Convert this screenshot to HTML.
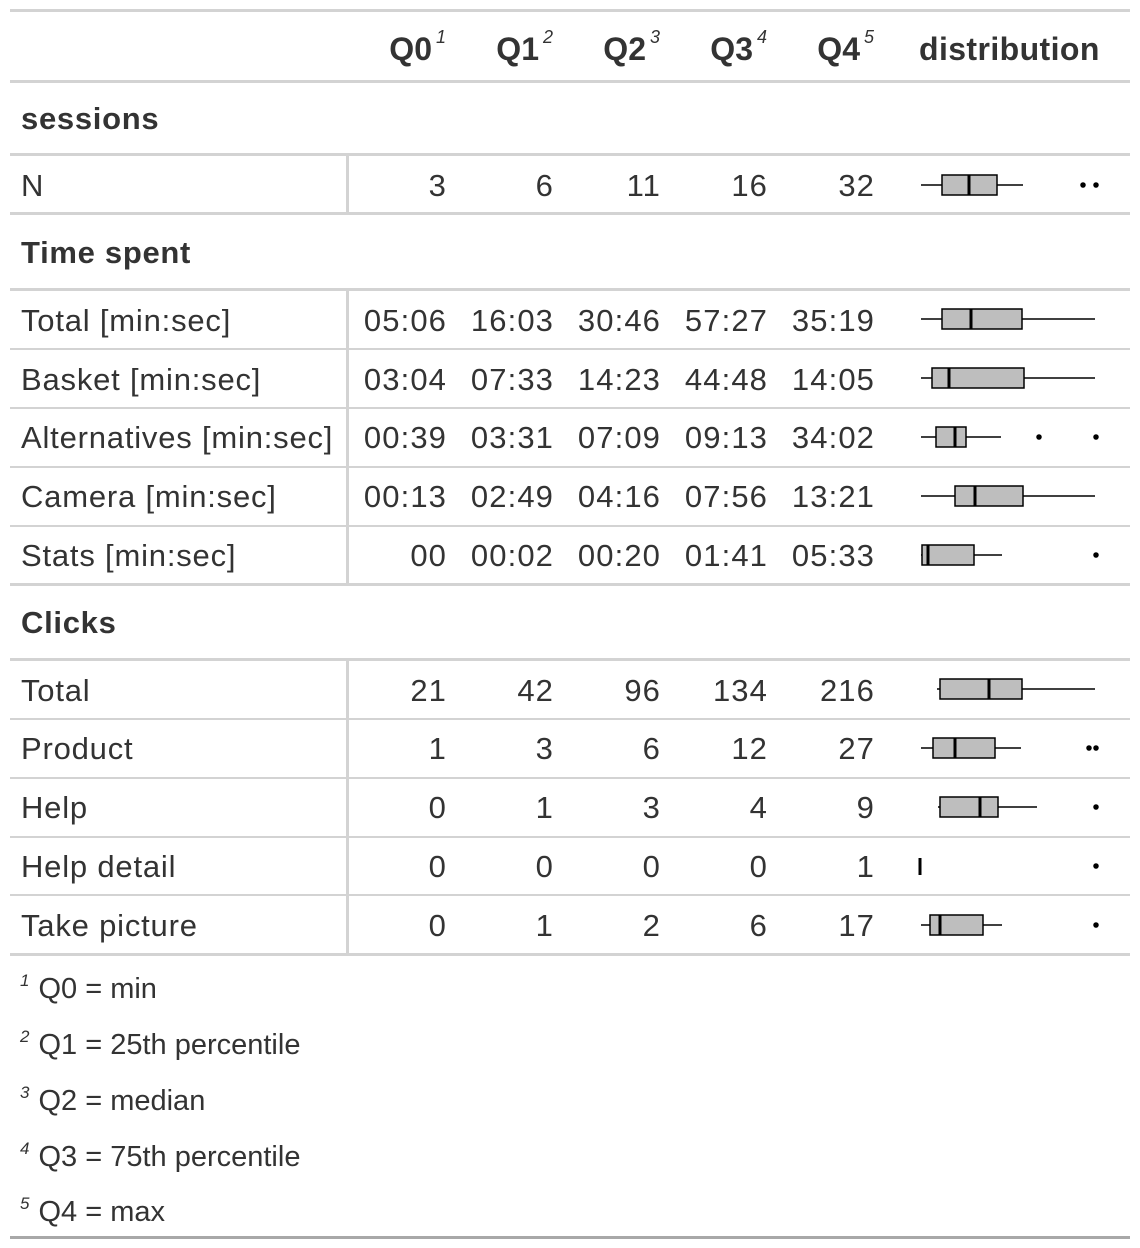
<!DOCTYPE html>
<html><head><meta charset="utf-8"><style>
body{margin:0;width:1140px;height:1248px;background:#fff;position:relative;overflow:hidden;font-family:"Liberation Sans",sans-serif;color:#333;}
.l{position:absolute;left:10px;width:1120px;background:#d3d3d3;}
.v{position:absolute;left:346px;width:3px;background:#d3d3d3;}
.t{position:absolute;height:40px;line-height:40px;font-size:31px;white-space:nowrap;letter-spacing:0.8px;}
.n{position:absolute;height:40px;line-height:40px;font-size:31px;white-space:nowrap;text-align:right;width:110px;letter-spacing:1.1px;}
.b{font-weight:bold;letter-spacing:0.7px;}
.h{position:absolute;height:40px;line-height:40px;font-size:32px;font-weight:bold;white-space:nowrap;text-align:right;width:100px;}
sup{font-size:18px;font-weight:normal;font-style:italic;vertical-align:top;position:relative;top:-12px;margin-left:4px;}
.f{position:absolute;left:20px;height:36px;line-height:36px;font-size:29px;white-space:nowrap;}
.f i{font-size:17px;position:relative;top:-12px;margin-right:9px;}
</style></head><body>
<div class="l" style="top:9px;height:3px"></div>
<div class="l" style="top:80px;height:3px"></div>
<div class="l" style="top:153px;height:3px"></div>
<div class="l" style="top:212px;height:3px"></div>
<div class="l" style="top:288px;height:3px"></div>
<div class="l" style="top:348px;height:2px"></div>
<div class="l" style="top:407px;height:2px"></div>
<div class="l" style="top:466px;height:2px"></div>
<div class="l" style="top:525px;height:2px"></div>
<div class="l" style="top:583px;height:3px"></div>
<div class="l" style="top:658px;height:3px"></div>
<div class="l" style="top:718px;height:2px"></div>
<div class="l" style="top:777px;height:2px"></div>
<div class="l" style="top:836px;height:2px"></div>
<div class="l" style="top:894px;height:2px"></div>
<div class="l" style="top:953px;height:3px"></div>
<div class="l" style="top:1236px;height:3px;background:#a8a8a8"></div>
<div class="v" style="top:155px;height:58px"></div>
<div class="v" style="top:290px;height:294px"></div>
<div class="v" style="top:660px;height:294px"></div>

<div class="h" style="left:346px;top:29px">Q0<sup>1</sup></div>
<div class="h" style="left:453px;top:29px">Q1<sup>2</sup></div>
<div class="h" style="left:560px;top:29px">Q2<sup>3</sup></div>
<div class="h" style="left:667px;top:29px">Q3<sup>4</sup></div>
<div class="h" style="left:774px;top:29px">Q4<sup>5</sup></div>
<div class="t b" style="left:919px;top:29px;font-size:32px;letter-spacing:0.4px">distribution</div>

<div class="t b" style="left:21px;top:99px">sessions</div>
<div class="t b" style="left:21px;top:233px">Time spent</div>
<div class="t b" style="left:21px;top:603px">Clicks</div>

<div class="t" style="left:21px;top:166px">N</div>
<div class="t" style="left:21px;top:301px">Total [min:sec]</div>
<div class="t" style="left:21px;top:360px">Basket [min:sec]</div>
<div class="t" style="left:21px;top:418px">Alternatives [min:sec]</div>
<div class="t" style="left:21px;top:477px">Camera [min:sec]</div>
<div class="t" style="left:21px;top:536px">Stats [min:sec]</div>
<div class="t" style="left:21px;top:671px">Total</div>
<div class="t" style="left:21px;top:729px">Product</div>
<div class="t" style="left:21px;top:788px">Help</div>
<div class="t" style="left:21px;top:847px">Help detail</div>
<div class="t" style="left:21px;top:906px">Take picture</div>

<div class="n" style="left:337px;top:166px">3</div><div class="n" style="left:444px;top:166px">6</div><div class="n" style="left:551px;top:166px">11</div><div class="n" style="left:658px;top:166px">16</div><div class="n" style="left:765px;top:166px">32</div>
<div class="n" style="left:337px;top:301px">05:06</div><div class="n" style="left:444px;top:301px">16:03</div><div class="n" style="left:551px;top:301px">30:46</div><div class="n" style="left:658px;top:301px">57:27</div><div class="n" style="left:765px;top:301px">35:19</div>
<div class="n" style="left:337px;top:360px">03:04</div><div class="n" style="left:444px;top:360px">07:33</div><div class="n" style="left:551px;top:360px">14:23</div><div class="n" style="left:658px;top:360px">44:48</div><div class="n" style="left:765px;top:360px">14:05</div>
<div class="n" style="left:337px;top:418px">00:39</div><div class="n" style="left:444px;top:418px">03:31</div><div class="n" style="left:551px;top:418px">07:09</div><div class="n" style="left:658px;top:418px">09:13</div><div class="n" style="left:765px;top:418px">34:02</div>
<div class="n" style="left:337px;top:477px">00:13</div><div class="n" style="left:444px;top:477px">02:49</div><div class="n" style="left:551px;top:477px">04:16</div><div class="n" style="left:658px;top:477px">07:56</div><div class="n" style="left:765px;top:477px">13:21</div>
<div class="n" style="left:337px;top:536px">00</div><div class="n" style="left:444px;top:536px">00:02</div><div class="n" style="left:551px;top:536px">00:20</div><div class="n" style="left:658px;top:536px">01:41</div><div class="n" style="left:765px;top:536px">05:33</div>
<div class="n" style="left:337px;top:671px">21</div><div class="n" style="left:444px;top:671px">42</div><div class="n" style="left:551px;top:671px">96</div><div class="n" style="left:658px;top:671px">134</div><div class="n" style="left:765px;top:671px">216</div>
<div class="n" style="left:337px;top:729px">1</div><div class="n" style="left:444px;top:729px">3</div><div class="n" style="left:551px;top:729px">6</div><div class="n" style="left:658px;top:729px">12</div><div class="n" style="left:765px;top:729px">27</div>
<div class="n" style="left:337px;top:788px">0</div><div class="n" style="left:444px;top:788px">1</div><div class="n" style="left:551px;top:788px">3</div><div class="n" style="left:658px;top:788px">4</div><div class="n" style="left:765px;top:788px">9</div>
<div class="n" style="left:337px;top:847px">0</div><div class="n" style="left:444px;top:847px">0</div><div class="n" style="left:551px;top:847px">0</div><div class="n" style="left:658px;top:847px">0</div><div class="n" style="left:765px;top:847px">1</div>
<div class="n" style="left:337px;top:906px">0</div><div class="n" style="left:444px;top:906px">1</div><div class="n" style="left:551px;top:906px">2</div><div class="n" style="left:658px;top:906px">6</div><div class="n" style="left:765px;top:906px">17</div>

<svg style="position:absolute;left:0;top:0" width="1140" height="1248" stroke="#000" stroke-width="1.5">
<g fill="#bebebe">
<line x1="921" y1="185" x2="1023" y2="185"/><rect x="942" y="175" width="55" height="20"/><line x1="969" y1="175" x2="969" y2="195" stroke-width="3"/>
<circle cx="1083" cy="185" r="2" fill="#000"/><circle cx="1096" cy="185" r="2" fill="#000"/>
<line x1="921" y1="319" x2="1095" y2="319"/><rect x="942" y="309" width="80" height="20"/><line x1="971" y1="309" x2="971" y2="329" stroke-width="3"/>
<line x1="921" y1="378" x2="1095" y2="378"/><rect x="932" y="368" width="92" height="20"/><line x1="949" y1="368" x2="949" y2="388" stroke-width="3"/>
<line x1="921" y1="437" x2="1001" y2="437"/><rect x="936" y="427" width="30" height="20"/><line x1="955" y1="427" x2="955" y2="447" stroke-width="3"/>
<circle cx="1039" cy="437" r="2" fill="#000"/><circle cx="1096" cy="437" r="2" fill="#000"/>
<line x1="921" y1="496" x2="1095" y2="496"/><rect x="955" y="486" width="68" height="20"/><line x1="975" y1="486" x2="975" y2="506" stroke-width="3"/>
<line x1="921" y1="555" x2="1002" y2="555"/><rect x="922" y="545" width="52" height="20"/><line x1="928" y1="545" x2="928" y2="565" stroke-width="3"/>
<circle cx="1096" cy="555" r="2" fill="#000"/>
<line x1="937" y1="689" x2="1095" y2="689"/><rect x="940" y="679" width="82" height="20"/><line x1="989" y1="679" x2="989" y2="699" stroke-width="3"/>
<line x1="921" y1="748" x2="1021" y2="748"/><rect x="933" y="738" width="62" height="20"/><line x1="955" y1="738" x2="955" y2="758" stroke-width="3"/>
<circle cx="1089" cy="748" r="2" fill="#000"/><circle cx="1096" cy="748" r="2" fill="#000"/>
<line x1="938" y1="807" x2="1037" y2="807"/><rect x="940" y="797" width="58" height="20"/><line x1="980" y1="797" x2="980" y2="817" stroke-width="3"/>
<circle cx="1096" cy="807" r="2" fill="#000"/>
<line x1="920" y1="858" x2="920" y2="875" stroke-width="3"/>
<circle cx="1096" cy="866" r="2" fill="#000"/>
<line x1="921" y1="925" x2="1002" y2="925"/><rect x="930" y="915" width="53" height="20"/><line x1="940" y1="915" x2="940" y2="935" stroke-width="3"/>
<circle cx="1096" cy="925" r="2" fill="#000"/>
</g></svg>

<div class="f" style="top:971px"><i>1</i>Q0 = min</div>
<div class="f" style="top:1027px"><i>2</i>Q1 = 25th percentile</div>
<div class="f" style="top:1083px"><i>3</i>Q2 = median</div>
<div class="f" style="top:1139px"><i>4</i>Q3 = 75th percentile</div>
<div class="f" style="top:1194px"><i>5</i>Q4 = max</div>
</body></html>
